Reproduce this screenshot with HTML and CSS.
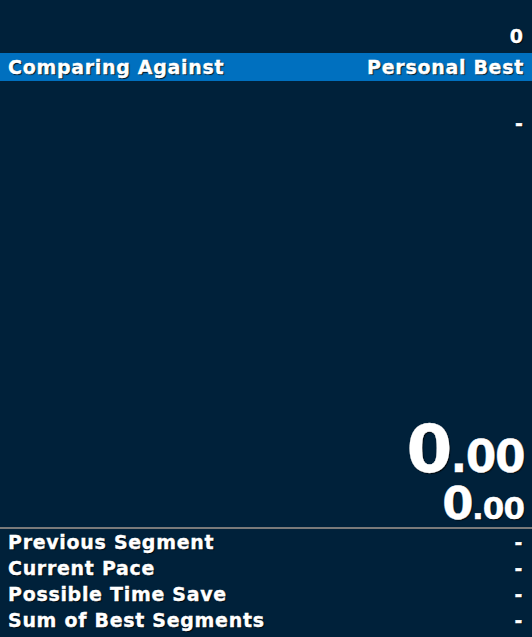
FILE: index.html
```html
<!DOCTYPE html>
<html>
<head>
<meta charset="utf-8">
<link rel="stylesheet" href="styles.css">
</head>
<body>
<div class="app">
  <div class="title">
    <span class="attempts">0</span>
  </div>
  <div class="bar">
    <span>Comparing Against</span>
    <span>Personal Best</span>
  </div>
  <div class="splits">
    <div class="split">
      <span class="name"></span>
      <span class="val">-</span>
    </div>
  </div>
  <div class="timer">
    <div class="main"><span class="big">0</span><span class="frac">.00</span></div>
    <div class="seg"><span class="big">0</span><span class="frac">.00</span></div>
  </div>
  <div class="sep"></div>
  <div class="info">
    <div class="row"><span>Previous Segment</span><span>-</span></div>
    <div class="row"><span>Current Pace</span><span>-</span></div>
    <div class="row"><span>Possible Time Save</span><span>-</span></div>
    <div class="row"><span>Sum of Best Segments</span><span>-</span></div>
  </div>
</div>
</body>
</html>
```

FILE: styles.css
```css
html, body {
  margin: 0;
  padding: 0;
  background: #00213a;
}
.app {
  width: 532px;
  height: 637px;
  display: flex;
  flex-direction: column;
  background: #00213a;
  color: #fff;
  font-family: "DejaVu Sans", sans-serif;
  font-weight: bold;
  text-shadow: 1px 1px 1px rgba(0, 0, 0, 0.85);
  -webkit-text-stroke: 0.35px #fff;
}
.title {
  height: 53px;
  display: flex;
  justify-content: flex-end;
  align-items: flex-end;
  padding: 0 9px 6px 8px;
  box-sizing: border-box;
  font-size: 19px;
}
.bar {
  height: 28px;
  background: #0070bf;
  display: flex;
  justify-content: space-between;
  align-items: center;
  padding: 0 8px 0 8px;
  font-size: 19px;
  letter-spacing: 0.7px;
}
.splits {
  flex: 1;
  padding-top: 29px;
}
.split {
  display: flex;
  justify-content: space-between;
  padding: 0 9px 0 8px;
  font-size: 19px;
  height: 26px;
  line-height: 26px;
}
.timer {
  display: flex;
  flex-direction: column;
  align-items: flex-end;
  padding-right: 8px;
}
.main {
  height: 62px;
  line-height: 62px;
}
.main .big { font-size: 66px; letter-spacing: -2px; }
.main .frac { font-size: 44px; letter-spacing: -1.5px; }
.seg {
  height: 46px;
  line-height: 46px;
}
.seg .big { font-size: 45px; letter-spacing: -1.5px; }
.seg .frac { font-size: 31px; letter-spacing: -1px; }
.sep {
  height: 2px;
  background: #7a7a7a;
}
.info {
  padding-bottom: 4px;
}
.row {
  height: 26px;
  line-height: 26px;
  display: flex;
  justify-content: space-between;
  padding: 0 9px 0 8px;
  font-size: 19px;
  letter-spacing: 0.7px;
}
```
